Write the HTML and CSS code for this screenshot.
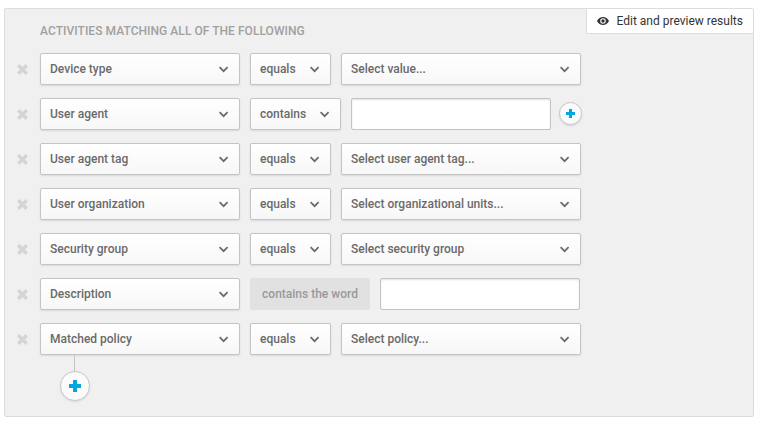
FILE: index.html
```html
<!DOCTYPE html>
<html lang="en">
<head>
<meta charset="utf-8">
<title>Activity filters</title>
<link rel="stylesheet" href="styles.css">
</head>
<body>
<svg class="defs" width="0" height="0">
  <symbol id="chev" viewBox="0 0 10 7"><path d="M.6 1.200 4.600 5.200 8.600 1.200" fill="none" stroke="#6a6a6a" stroke-width="1.700"/></symbol>
  <symbol id="cross" viewBox="0.800 0.800 10.400 10.400"><path d="M2 2 10 10M10 2 2 10" fill="none" stroke="#d4d4d4" stroke-width="3.200"/></symbol>
  <symbol id="plus" viewBox="0 0 12 12"><path d="M4 0h4v4h4v4H8v4H4V8H0V4h4z" fill="#00a8de"/></symbol>
</svg>
<section class="panel">
  <button class="preview">
    <svg width="12" height="8" viewBox="0 0 12 8"><path fill="#333" fill-rule="evenodd" d="M0 4C1.4 1.4 3.4 0 6 0s4.600 1.400 6 4C10.600 6.600 8.600 8 6 8S1.400 6.600 0 4zM6 1.200a2.800 2.800 0 1 0 0 5.600 2.800 2.800 0 0 0 0-5.600z"/><circle cx="6" cy="4" r="1.700" fill="#333"/></svg>
    <span>Edit and preview results</span>
  </button>
  <h2 class="title">ACTIVITIES MATCHING ALL OF THE FOLLOWING</h2>
  <div class="rows">
    <div class="row">
      <svg class="remove"><use href="#cross"/></svg>
      <div class="select field"><span>Device type</span><svg class="chev"><use href="#chev"/></svg></div>
      <div class="select op"><span>equals</span><svg class="chev"><use href="#chev"/></svg></div>
      <div class="select value"><span>Select value...</span><svg class="chev"><use href="#chev"/></svg></div>
    </div>
    <div class="row">
      <svg class="remove"><use href="#cross"/></svg>
      <div class="select field"><span>User agent</span><svg class="chev"><use href="#chev"/></svg></div>
      <div class="select op wide"><span>contains</span><svg class="chev"><use href="#chev"/></svg></div>
      <input class="text" type="text" aria-label="User agent">
      <button class="add small" aria-label="Add value"><svg width="9" height="9"><use href="#plus"/></svg></button>
    </div>
    <div class="row">
      <svg class="remove"><use href="#cross"/></svg>
      <div class="select field"><span>User agent tag</span><svg class="chev"><use href="#chev"/></svg></div>
      <div class="select op"><span>equals</span><svg class="chev"><use href="#chev"/></svg></div>
      <div class="select value"><span>Select user agent tag...</span><svg class="chev"><use href="#chev"/></svg></div>
    </div>
    <div class="row">
      <svg class="remove"><use href="#cross"/></svg>
      <div class="select field"><span>User organization</span><svg class="chev"><use href="#chev"/></svg></div>
      <div class="select op"><span>equals</span><svg class="chev"><use href="#chev"/></svg></div>
      <div class="select value"><span>Select organizational units...</span><svg class="chev"><use href="#chev"/></svg></div>
    </div>
    <div class="row">
      <svg class="remove"><use href="#cross"/></svg>
      <div class="select field"><span>Security group</span><svg class="chev"><use href="#chev"/></svg></div>
      <div class="select op"><span>equals</span><svg class="chev"><use href="#chev"/></svg></div>
      <div class="select value"><span>Select security group</span><svg class="chev"><use href="#chev"/></svg></div>
    </div>
    <div class="row">
      <svg class="remove"><use href="#cross"/></svg>
      <div class="select field"><span>Description</span><svg class="chev"><use href="#chev"/></svg></div>
      <div class="fixed-op">contains the word</div>
      <input class="text" type="text" aria-label="Description">
    </div>
    <div class="row">
      <svg class="remove"><use href="#cross"/></svg>
      <div class="select field"><span>Matched policy</span><svg class="chev"><use href="#chev"/></svg></div>
      <div class="select op"><span>equals</span><svg class="chev"><use href="#chev"/></svg></div>
      <div class="select value"><span>Select policy...</span><svg class="chev"><use href="#chev"/></svg></div>
    </div>
  </div>
  <div class="more">
    <span class="stem"></span>
    <button class="add" aria-label="Add filter"><svg width="12" height="12"><use href="#plus"/></svg></button>
  </div>
</section>
</body>
</html>
```
FILE: styles.css
```css
* { box-sizing: border-box; }
body {
  margin: 0;
  background: #fff;
  font: 500 12px/16px Roboto, "Liberation Sans", sans-serif;
  color: #6a6a6a;
}
svg { display: block; flex: none; }
.defs { position: absolute; }
button { padding: 0; font: inherit; }
.panel {
  position: relative;
  width: 750px;
  height: 409px;
  margin: 8px 0 0 4px;
  padding: 14px 12px 0;
  background: #f0f0f0;
  border: 1px solid #dcdcdc;
  border-radius: 2px;
}
.preview {
  position: absolute;
  top: 0;
  right: 0;
  display: flex;
  align-items: center;
  gap: 7.500px;
  width: 167px;
  height: 25px;
  padding-left: 10px;
  background: #fff;
  border: solid #dcdcdc;
  border-width: 0 0 1px 1px;
  border-radius: 0 0 0 2px;
  color: #333;
  font-weight: 400;
  white-space: nowrap;
}
.title {
  margin: 0 0 14px 23px;
  font-size: 12px;
  font-weight: 500;
  line-height: 16px;
  letter-spacing: .05px;
  color: #a0a0a0;
}
.rows { display: grid; gap: 13px; }
.row { display: flex; align-items: center; gap: 10px; height: 32px; }
.remove { width: 11px; height: 11px; margin: 1px 2px 0 0; }
.select {
  display: flex;
  align-items: center;
  justify-content: space-between;
  height: 32px;
  padding: 0 10px 0 9px;
  background: linear-gradient(#fff, #f7f7f7);
  border: 1px solid #c4c4c4;
  border-radius: 2px;
  box-shadow: 0 1px 2px rgba(0, 0, 0, .1);
  white-space: nowrap;
}
.chev { width: 10px; height: 7px; }
.field { width: 200px; }
.op { width: 81px; }
.wide { width: 91px; }
.value { width: 240px; }
.text {
  width: 200px;
  height: 32px;
  padding: 0 9px;
  background: #fff;
  border: 1px solid #c4c4c4;
  border-radius: 2px;
  box-shadow: inset 0 1px 2px rgba(0, 0, 0, .12);
  font: inherit;
}
.fixed-op {
  width: 120px;
  height: 32px;
  background: #e1e1e1;
  border-radius: 2px;
  color: #999;
  line-height: 32px;
  text-align: center;
}
.add {
  display: flex;
  align-items: center;
  justify-content: center;
  width: 30px;
  height: 30px;
  background: #fbfbfb;
  border: 1px solid #c8c8c8;
  border-radius: 50%;
  box-shadow: 0 1px 2px rgba(0, 0, 0, .1);
}
.small { width: 23px; height: 23px; margin: 0 0 1px -2px; }
.more {
  display: flex;
  flex-direction: column;
  align-items: center;
  width: 30px;
  margin-left: 43px;
}
.stem { width: 1px; height: 16px; margin-right: 1px; background: #c4c4c4; }
```
